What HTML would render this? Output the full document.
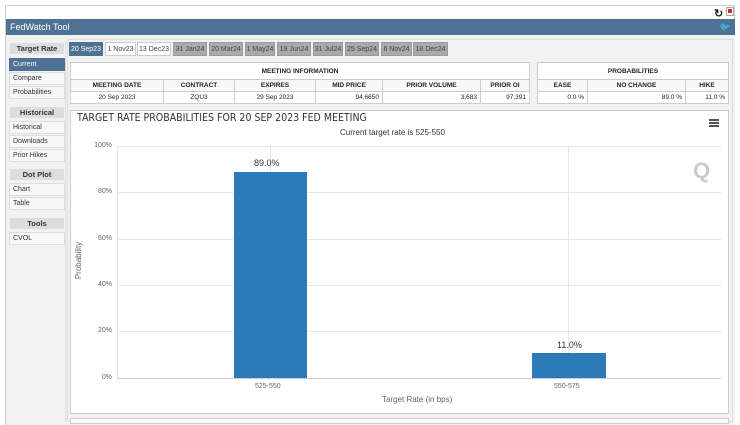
<html><head><style>
body{margin:0;width:740px;height:422px;background:#fff;font-family:"Liberation Sans",sans-serif;position:relative;overflow:hidden}
.a{position:absolute}
.frame{left:5px;top:5px;width:730px;height:420px;border:1px solid #ccc;box-sizing:border-box}
.hdr{left:6px;top:19px;width:729px;height:16px;background:#4f7294;color:#fff;font-size:9px;line-height:16px;padding-left:4px;box-sizing:border-box}
.body{left:6px;top:35px;width:729px;height:390px;background:#f2f2f2}
.side{left:8px;top:41px;width:57px;height:381px;border-right:1px solid #ddd}
.sh{position:absolute;left:2px;width:54px;height:11px;background:#ddd;font-size:7.5px;font-weight:bold;text-align:center;line-height:11px;color:#333}
.si{position:absolute;left:1px;width:56px;height:13px;background:#f8f8f8;border:1px solid #ddd;box-sizing:border-box;font-size:7px;line-height:12px;padding-left:3px;color:#333}
.tab{position:absolute;top:42px;height:14px;font-size:7px;line-height:14px;text-align:center;background:#aaa;color:#444;border:1px solid #999;box-sizing:border-box}
table{border-collapse:collapse;position:absolute;background:#fff;font-size:6.5px;color:#222}
td{border:1px solid #ccc;padding:0 3px;height:12px}
.gl{position:absolute;height:1px;background:#e6e6e6;left:117px;width:604px}
.yl{position:absolute;left:86px;width:26px;text-align:right;font-size:7px;color:#666}
</style></head><body>
<div class="a frame"></div>
<div class="a" style="left:714px;top:7px;font-size:11px;font-weight:bold;color:#222">↻</div>
<div class="a" style="left:726px;top:7px;width:8px;height:9px;background:#fff;border:1px solid #aaa;box-sizing:border-box"><div style="margin:1px;width:4px;height:4px;background:#d22"></div></div>
<div class="a hdr">FedWatch Tool<span style="position:absolute;right:4px;top:0;color:#bfe0ff">🐦</span></div>
<div class="a body"></div>
<div class="a side">
<div class="sh" style="top:2px">Target Rate</div>
<div class="si" style="top:17px;background:#4f7294;color:#fff;border-color:#4f7294">Current</div>
<div class="si" style="top:31px">Compare</div>
<div class="si" style="top:45px">Probabilities</div>
<div class="sh" style="top:66px">Historical</div>
<div class="si" style="top:80px">Historical</div>
<div class="si" style="top:94px">Downloads</div>
<div class="si" style="top:108px">Prior Hikes</div>
<div class="sh" style="top:128px">Dot Plot</div>
<div class="si" style="top:142px">Chart</div>
<div class="si" style="top:156px">Table</div>
<div class="sh" style="top:177px">Tools</div>
<div class="si" style="top:191px">CVOL</div>
</div>
<div class="a" style="left:67px;top:39px;width:666px;height:383px;border:1px solid #ddd;box-sizing:border-box"></div>
<div class="tab" style="left:69px;width:34px;background:#4f7294;color:#fff;border-color:#4f7294">20 Sep23</div>
<div class="tab" style="left:105px;width:31px;background:#fff;border-color:#ccc">1 Nov23</div>
<div class="tab" style="left:137px;width:34px;background:#fff;border-color:#ccc">13 Dec23</div>
<div class="tab" style="left:173px;width:34px">31 Jan24</div>
<div class="tab" style="left:209px;width:34px">20 Mar24</div>
<div class="tab" style="left:245px;width:30px">1 May24</div>
<div class="tab" style="left:277px;width:34px">19 Jun24</div>
<div class="tab" style="left:313px;width:30px">31 Jul24</div>
<div class="tab" style="left:345px;width:34px">25 Sep24</div>
<div class="tab" style="left:381px;width:31px">6 Nov24</div>
<div class="tab" style="left:413px;width:35px">18 Dec24</div>
<table style="left:70px;top:62px;width:460px">
<tr><td colspan="6" style="height:17px;text-align:center;font-weight:bold">MEETING INFORMATION</td></tr>
<tr style="font-weight:bold;text-align:center;background:#f8f8f8"><td style="width:86px">MEETING DATE</td><td style="width:64px">CONTRACT</td><td style="width:74px">EXPIRES</td><td style="width:60px">MID PRICE</td><td style="width:91px">PRIOR VOLUME</td><td>PRIOR OI</td></tr>
<tr><td style="text-align:center">20 Sep 2023</td><td style="text-align:center">ZQU3</td><td style="text-align:center">29 Sep 2023</td><td style="text-align:right">94.6650</td><td style="text-align:right">3,683</td><td style="text-align:right">97,391</td></tr>
</table>
<table style="left:537px;top:62px;width:192px">
<tr><td colspan="3" style="height:17px;text-align:center;font-weight:bold">PROBABILITIES</td></tr>
<tr style="font-weight:bold;text-align:center;background:#f8f8f8"><td style="width:43px">EASE</td><td style="width:91px">NO CHANGE</td><td>HIKE</td></tr>
<tr style="text-align:right"><td>0.0 %</td><td>89.0 %</td><td>11.0 %</td></tr>
</table>
<div class="a" style="left:70px;top:110px;width:659px;height:304px;background:#fff;border:1px solid #ccc;box-sizing:border-box"></div>
<div class="a" style="left:77px;top:112px;font-size:10.5px;color:#333;font-family:'DejaVu Sans Condensed','Liberation Sans',sans-serif">TARGET RATE PROBABILITIES FOR 20 SEP 2023 FED MEETING</div>
<div class="a" style="left:340px;top:128px;font-size:8px;color:#333">Current target rate is 525-550</div>
<div class="a" style="left:709px;top:119px;width:10px;height:2px;background:#555;box-shadow:0 3px #555,0 6px #555"></div>
<div class="a" style="left:693px;top:158px;font-size:22px;font-weight:bold;color:#ccc">Q</div>
<div class="gl" style="top:146px"></div><div class="gl" style="top:192px"></div><div class="gl" style="top:239px"></div><div class="gl" style="top:285px"></div><div class="gl" style="top:331px"></div><div class="gl" style="top:378px;background:#ccc"></div>
<div class="a" style="left:117px;top:146px;width:1px;height:232px;background:#e6e6e6"></div>
<div class="a" style="left:270px;top:146px;width:1px;height:232px;background:#e6e6e6"></div>
<div class="a" style="left:568px;top:146px;width:1px;height:232px;background:#e6e6e6"></div>
<div class="yl" style="top:142px">100%</div><div class="yl" style="top:188px">80%</div><div class="yl" style="top:235px">60%</div><div class="yl" style="top:281px">40%</div><div class="yl" style="top:327px">20%</div><div class="yl" style="top:374px">0%</div>
<div class="a" style="left:60px;top:256px;transform:rotate(-90deg);font-size:8px;color:#666">Probability</div>
<div class="a" style="left:234px;top:172px;width:73px;height:206px;background:#2b7bb9"></div>
<div class="a" style="left:532px;top:353px;width:74px;height:25px;background:#2b7bb9"></div>
<div class="a" style="left:254px;top:158px;font-size:9px;color:#333">89.0%</div>
<div class="a" style="left:557px;top:340px;font-size:9px;color:#333">11.0%</div>
<div class="a" style="left:255px;top:383px;font-size:7px;color:#666">525-550</div>
<div class="a" style="left:554px;top:383px;font-size:7px;color:#666">550-575</div>
<div class="a" style="left:382px;top:395px;font-size:8px;color:#666">Target Rate (in bps)</div>
<div class="a" style="left:70px;top:418px;width:659px;height:6px;background:#fff;border:1px solid #ccc;box-sizing:border-box"></div>
</body></html>
